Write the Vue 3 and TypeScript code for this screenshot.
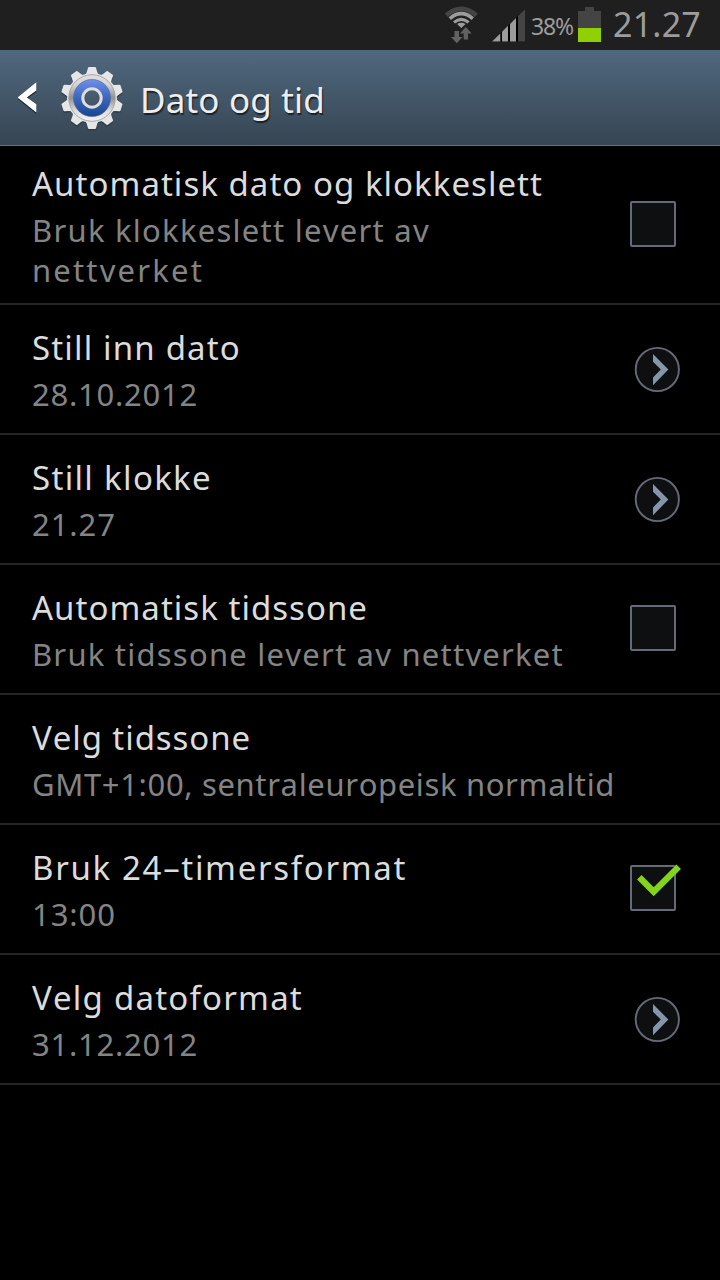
<script setup lang="ts">
type Control = 'check' | 'arrow' | 'none'

interface Line {
  text: string
  width: number
}

interface Setting {
  title: Line
  summary: Line[]
  control: Control
  checked?: boolean
}

const settings: Setting[] = [
  {
    title: { text: 'Automatisk dato og klokkeslett', width: 511 },
    summary: [
      { text: 'Bruk klokkeslett levert av', width: 398 },
      { text: 'nettverket', width: 172 },
    ],
    control: 'check',
  },
  {
    title: { text: 'Still inn dato', width: 209 },
    summary: [{ text: '28.10.2012', width: 166 }],
    control: 'arrow',
  },
  {
    title: { text: 'Still klokke', width: 180 },
    summary: [{ text: '21.27', width: 84 }],
    control: 'arrow',
  },
  {
    title: { text: 'Automatisk tidssone', width: 336 },
    summary: [{ text: 'Bruk tidssone levert av nettverket', width: 532 }],
    control: 'check',
  },
  {
    title: { text: 'Velg tidssone', width: 219 },
    summary: [{ text: 'GMT+1:00, sentraleuropeisk normaltid', width: 583 }],
    control: 'none',
  },
  {
    title: { text: 'Bruk 24–timersformat', width: 375 },
    summary: [{ text: '13:00', width: 84 }],
    control: 'check',
    checked: true,
  },
  {
    title: { text: 'Velg datoformat', width: 271 },
    summary: [{ text: '31.12.2012', width: 166 }],
    control: 'arrow',
  },
]

const teeth = Array.from({ length: 10 }, (_, i) => i * 36)

// Tracks the letters out (or in) so that a line takes its given width.
const vFit = {
  mounted(el: HTMLElement, binding: { value: number }) {
    const natural = el.getBoundingClientRect().width
    const count = (el.textContent ?? '').length
    el.style.letterSpacing = `${(binding.value - natural) / count}px`
  },
}
</script>

<template>
  <div class="screen">
    <header class="status">
      <svg class="wifi" width="34" height="38" viewBox="444 6 34 38">
        <g fill="none" stroke-width="3.6">
          <path d="M446.3 15.2Q461.3 2.6 476.3 15.2" stroke="#444" stroke-width="4.6" />
          <path d="M449.8 18.6Q461.3 8.8 472.8 18.6" stroke="#9c9c9c" />
          <path d="M454 22.4Q461.3 16.2 468.6 22.4" stroke="#9c9c9c" stroke-width="3.2" />
        </g>
        <path d="M457 24Q461.3 21.4 465.6 24L461.3 28Z" fill="#9c9c9c" />
        <path d="M454.500 31h4.500v6h3.500l-5.700 6.200-5.800-6.200h3.500Z" fill="#626262" />
        <path d="M463.700 39.500v-6h-3.700l5.800-6.500 5.900 6.500h-3.700v6Z" fill="#626262" />
      </svg>
      <svg class="signal" width="34" height="33" viewBox="492 9.500 34 33">
        <path d="M492 42 525 9.700V42Z" fill="#000" />
        <path d="M492 42 500.300 33.900V42Z" fill="#9c9c9c" />
        <path d="M502 32.200 508 26.300V42H502Z" fill="#9c9c9c" />
        <path d="M510 24.400 516 18.500V42H510Z" fill="#9c9c9c" />
        <path d="M518 16.600 525 9.700V42H518Z" fill="#444" />
      </svg>
      <span class="percent"><span v-fit="42">38%</span></span>
      <svg class="battery" width="23" height="35" viewBox="0 0 23 35">
        <path d="M7 0h9v4h7v17H0V4h7Z" fill="#444" />
        <path d="M0 21h23v14H0Z" fill="#90d000" />
      </svg>
      <span class="clock"><span v-fit="88">21.27</span></span>
    </header>

    <div class="bar">
      <svg class="back" width="22" height="34" viewBox="16 81 22 34">
        <path d="M36.300 84.500 18 99.300 36.300 114V106.500L26.500 99.300 36.300 92Z" fill="#1d2731" />
        <path d="M36.300 82.300 17.600 97.500 36.300 112.500V104.300L26.800 97.500 36.300 90.500Z" fill="#fff" />
      </svg>
      <svg class="gear" width="64" height="66" viewBox="-32 -32 64 66">
        <defs>
          <linearGradient id="metal" gradientUnits="userSpaceOnUse" x1="0" y1="-26" x2="0" y2="26">
            <stop offset="0" stop-color="#e3e3e3" />
            <stop offset="0.250" stop-color="#d4d4d4" />
            <stop offset="0.500" stop-color="#929292" />
            <stop offset="0.750" stop-color="#dedede" />
            <stop offset="1" stop-color="#fafafa" />
          </linearGradient>
          <linearGradient id="blue" x1="0" y1="0" x2="0" y2="1">
            <stop offset="0" stop-color="#6d90ec" />
            <stop offset="0.500" stop-color="#3d66bd" />
            <stop offset="1" stop-color="#184690" />
          </linearGradient>
          <linearGradient id="hole" x1="0" y1="0" x2="0" y2="1">
            <stop offset="0" stop-color="#4b6075" />
            <stop offset="1" stop-color="#435364" />
          </linearGradient>
        </defs>
        <g fill="#28343f" opacity="0.600" transform="translate(0 1.500)">
          <circle r="25" />
          <path v-for="a in teeth" :key="a" d="M-6-24-4-31H4L6-24Z" :transform="`rotate(${a})`" />
        </g>
        <g fill="#e6e6e6">
          <path v-for="a in teeth" :key="a" d="M-6.300-23.500-5.200-26-4-30.200Q-3.700-31-3-31H3Q3.700-31 4-30.200L5.200-26 6.300-23.500Z" :transform="`rotate(${a})`" />
          <circle r="25" />
        </g>
        <circle r="23.300" fill="url(#metal)" stroke="#a2a2a2" stroke-width="0.900" />
        <circle r="18.600" fill="url(#blue)" stroke="#55698f" stroke-width="0.600" />
        <circle r="9.200" fill="url(#hole)" stroke="#dedede" stroke-width="3" />
      </svg>
      <h1 class="heading"><span v-fit="185">Dato og tid</span></h1>
    </div>

    <main class="list">
      <section v-for="s in settings" :key="s.title.text" class="row">
        <div class="text">
          <div class="title"><span v-fit="s.title.width">{{ s.title.text }}</span></div>
          <div v-for="l in s.summary" :key="l.text" class="summary">
            <span v-fit="l.width">{{ l.text }}</span>
          </div>
        </div>
        <div class="control">
          <svg v-if="s.control === 'check'" class="check" width="52" height="46" viewBox="0 0 52 46">
            <rect x="1" y="1" width="44" height="44" rx="1" fill="#0d0f11" stroke="#646b76" stroke-width="2" />
            <path v-if="s.checked" d="M9.300 12.300 23.700 26.700 48.700 1.700" fill="none" stroke="#84d41c" stroke-width="6.300" />
          </svg>
          <svg v-else-if="s.control === 'arrow'" class="arrow" width="46" height="46" viewBox="0 0 46 46">
            <circle cx="23.300" cy="22.500" r="21.600" fill="#0d0f11" stroke="#646b76" stroke-width="1.900" />
            <path d="M19 6.900 34.400 22.600 19 38.200V30.400L26.800 22.600 19 14.800Z" fill="#8496aa" />
          </svg>
        </div>
      </section>
    </main>
  </div>
</template>

<style>
body {
  margin: 0;
  background: #000;
}
</style>

<style scoped>
.screen {
  width: 720px;
  height: 1280px;
  overflow: hidden;
  background: #000;
  font-family: "Noto Sans", "Open Sans", sans-serif;
  font-kerning: none;
  font-variant-ligatures: none;
}

.screen span {
  display: inline-block;
  white-space: pre;
}

.status {
  display: flex;
  align-items: flex-start;
  box-sizing: border-box;
  height: 50px;
  padding-left: 444px;
  background: #1f1f1f;
  color: #9c9c9c;
}

.wifi {
  margin-top: 6px;
}

.signal {
  margin: 9px 0 0 14px;
}

.percent {
  width: 42px;
  margin: 12px 0 0 5px;
  font-size: 23px;
  line-height: 28px;
}

.battery {
  margin: 7px 0 0 5px;
}

.clock {
  margin: 3px 0 0 12px;
  font-size: 34px;
  line-height: 42px;
}

.bar {
  display: flex;
  align-items: center;
  box-sizing: border-box;
  height: 96px;
  padding-left: 16px;
  border-bottom: 1px solid #5f7481;
  background: linear-gradient(#50687e, #364553);
}

.gear {
  margin: 2px 0 0 22px;
}

.heading {
  margin: 5px 0 0 16px;
  color: #eee;
  font-size: 35px;
  font-weight: 400;
  line-height: 44px;
  text-shadow: 1px 2px 1px #18212a;
}

.row {
  display: flex;
  align-items: center;
  justify-content: space-between;
  box-sizing: border-box;
  min-height: 130px;
  padding: 13px 38px 13px 32px;
  border-bottom: 2px solid #252525;
}

.row:first-child .text {
  padding-top: 2px;
}

.title {
  margin-bottom: 3px;
  color: #dcdcdc;
  font-size: 33px;
  line-height: 46px;
}

.summary {
  color: #848484;
  font-size: 31px;
  line-height: 40px;
}

.title span,
.summary span {
  vertical-align: top;
}

.control {
  display: flex;
  flex: none;
  justify-content: flex-end;
  width: 52px;
}

.control svg {
  overflow: visible;
}

.check {
  margin-bottom: 2px;
}

.arrow {
  margin: 2px 2px 0 0;
}
</style>
